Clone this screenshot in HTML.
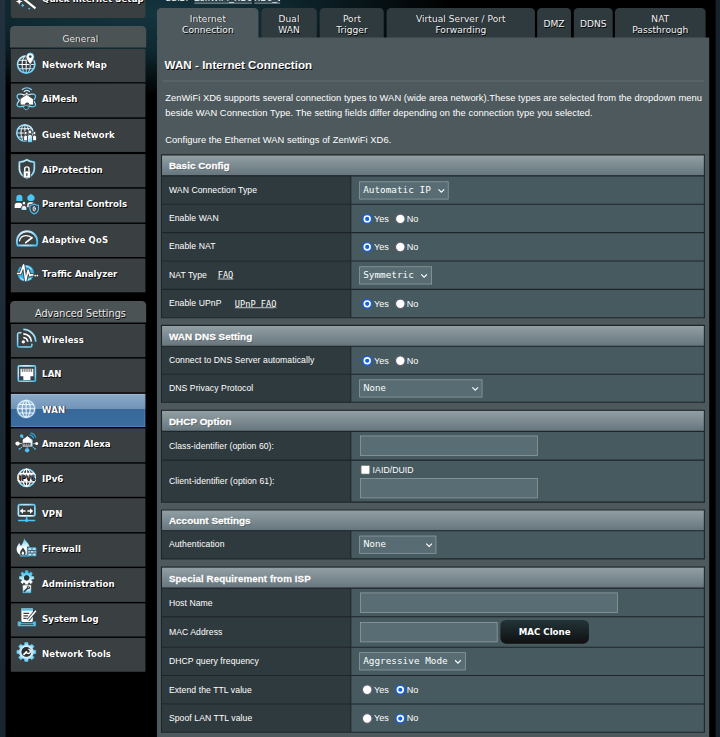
<!DOCTYPE html>
<html lang="en">
<head>
<meta charset="utf-8">
<title>ASUS Wireless Router ZenWiFi XD6 - Internet Connection</title>
<style>
*{box-sizing:border-box;margin:0;padding:0}
html,body{width:720px;height:737px;overflow:hidden;background:#1f2f3a}
body{font-family:"Liberation Sans",Arial,sans-serif;color:#fff}
#stage{position:absolute;left:0;top:0;width:1000px;height:1024px;transform:scale(.72);transform-origin:0 0;overflow:hidden;
 background:linear-gradient(#21323e,#18242e)}
#blk{position:absolute;left:7.6px;top:0;width:986.6px;height:1024px;background:radial-gradient(ellipse 430px 115px at 190px 18px,#14353f 0,#0f2830 45%,#000 100%) #000}
/* ---------- sidebar ---------- */
#side{position:absolute;left:14.5px;top:0;width:187.4px}
.split{position:absolute;left:-.6px;width:188.9px;height:29.6px;background:#4c5355;border-radius:6px 6px 0 0;padding:2.4px 0 0 6.6px;
 font:13.5px/29px "DejaVu Sans",sans-serif;text-align:center;color:#eee;text-shadow:1px 1px 0 #000;overflow:hidden}
.mi{position:absolute;left:0;width:187.4px;height:46.5px;background:#3a3f42;font:bold 12px/45.2px "DejaVu Sans",sans-serif;
 padding-left:44px;text-shadow:1px 1px 0 #000;white-space:nowrap}
.mi.on{background:linear-gradient(#8dabc9 0,#7093b7 46.5%,#386899 46.5%,#3b6da0 100%);box-shadow:inset 0 1px 0 #a5c0dc,inset -1px 0 0 #6b9dd3,inset 0 -1px 0 #568cc5}
.mi svg{position:absolute;left:5px;top:7px;width:32px;height:32px;overflow:visible}
.ssid{position:absolute;left:230px;top:-9.3px;font:12px/14px "Liberation Sans",sans-serif;color:#fff;white-space:nowrap}
.ssid u{display:inline-block;vertical-align:top;overflow:hidden;height:14px;margin-left:5px;text-decoration-thickness:1.3px;text-underline-offset:1.5px;letter-spacing:.55px;background:rgba(255,255,255,.12)}
/* ---------- tabs ---------- */
.tab{position:absolute;top:11px;height:41.5px;background:#2f3a3e;border-radius:6px 6px 0 0;font:12.7px/16px "DejaVu Sans",sans-serif;
 text-align:center;color:#f2f2f2;display:flex;align-items:center;justify-content:center;text-shadow:1px 1px 0 #000;padding-top:3.6px}
.tab.on{background:#4d595d}
#panel{position:absolute;left:218px;top:52px;width:767px;height:980px;background:#4d595d;border-radius:4px 0 0 0}
.ttl{position:absolute;left:10.6px;top:28px;font:bold 16.2px/20px "Liberation Sans",sans-serif;text-shadow:1px 1px 0 #000;white-space:nowrap}
.hr{position:absolute;left:8px;top:60px;width:752px;height:1px;background:#6b777b}
.desc{position:absolute;left:11.5px;font:13px/21px "Liberation Sans",sans-serif;white-space:nowrap;letter-spacing:.045px}
/* ---------- tables ---------- */
.tb{position:absolute;left:6px;width:755px;overflow:hidden}
.ln{position:absolute;left:0;top:0;pointer-events:none}
.th{background:linear-gradient(#93a1a6,#66757c);font:bold 13.8px "Liberation Sans",sans-serif;padding:2.4px 0 0 10.6px;
 text-shadow:1px 1px 0 rgba(0,0,0,.35);white-space:nowrap;display:flex;align-items:center;-webkit-text-stroke:.35px #fff}
.r{position:relative;background:#475a5f}
.r .l{position:absolute;left:0;top:0;bottom:0;width:263px;background:#2f3a3e;font:12px/15px "Liberation Sans",sans-serif;
 padding:.8px 0 0 10.6px;display:flex;align-items:center;white-space:nowrap;letter-spacing:.09px}
.r .c{position:absolute;left:262px;top:0;bottom:0;right:0}
.l a{color:#fff;font:12px "DejaVu Sans Mono","Liberation Mono",monospace;text-decoration:underline;margin-left:18.5px;letter-spacing:0}
.sel{position:absolute;left:13.4px;top:50%;margin-top:-12.2px;height:25px;background:#576d73;border:1px solid #929ea1;font:13px/22.5px "DejaVu Sans Mono","Liberation Mono",monospace;
 padding-left:4px;white-space:nowrap;color:#fff}
.sel.s2{font:12px/23.5px "DejaVu Sans",sans-serif}
.sel svg{position:absolute;right:4.5px;top:9px;width:10px;height:7px}
.inp{position:absolute;left:14px;height:27.5px;background:#596e74;border:1px solid #929ea1}
.rd{position:absolute;top:11.9px;width:16px;height:16px}
.rt{position:absolute;top:12.7px;font:12.6px/15px "Liberation Sans",sans-serif;letter-spacing:.1px}
.btn{position:absolute;left:208.6px;top:4px;width:123.6px;height:33px;border-radius:8px;background:linear-gradient(#233438,#0f1011);
 font:bold 12px/34.5px "DejaVu Sans",sans-serif;text-align:center}
</style>
</head>
<body>
<div id="stage">
<svg width="0" height="0" style="position:absolute"><defs><radialGradient id="ig" gradientUnits="userSpaceOnUse" cx="16" cy="12" r="17"><stop offset=".35" stop-color="#fff"/><stop offset="1" stop-color="#3cc0f4"/></radialGradient><linearGradient id="ig2" gradientUnits="userSpaceOnUse" x1="0" y1="0" x2="0" y2="28"><stop offset="0" stop-color="#49c6f5"/><stop offset=".45" stop-color="#fff"/><stop offset=".7" stop-color="#fff"/><stop offset="1" stop-color="#49c6f5"/></linearGradient><radialGradient id="ig3" gradientUnits="userSpaceOnUse" cx="16.6" cy="12.5" r="14"><stop offset=".45" stop-color="#f4fbff"/><stop offset="1" stop-color="#45c4f5"/></radialGradient></defs></svg>
<div id="blk"></div><div style="position:absolute;left:994.2px;top:0;width:6px;height:1024px;background:#15222c"></div>
<div id="side">
<div class="mi" style="top:-21.81px;border-radius:5px;line-height:42.6px"><svg viewBox="0 0 32 32" fill="none" stroke="url(#ig)" stroke-width="2" stroke-linecap="round" stroke-linejoin="round"><path d="M8 9.600L29.300 26.500" stroke="#3a3f42" stroke-width="5.200" stroke-linecap="butt"/><path d="M8 9.600L29.300 26.500" stroke="#fff" stroke-width="3" stroke-linecap="butt"/><path d="M11.500 20.300l2.200 2.200-2.200 2.200-2.200-2.200zM20.500 25.500l1.600 1.600-1.600 1.600-1.600-1.600z" fill="#49c6f5" stroke="none"/><path d="M6.700 12.500l1.300 3.300 3.300 1.300-3.300 1.300-1.300 3.300-1.300-3.300-3.300-1.300 3.300-1.300z" fill="#fff" stroke="none"/></svg>Quick Internet Setup</div>
<div class="split" style="top:36.2px;font-size:12.7px">General</div>
<div class="mi" style="top:67.71px"><svg viewBox="0 0 32 32" fill="none" stroke="url(#ig)" stroke-width="2" stroke-linecap="round" stroke-linejoin="round"><circle cx="16.4" cy="14.6" r="12" stroke-width="2.3"/><g stroke-width="1.4"><ellipse cx="16.4" cy="14.6" rx="5.76" ry="12"/><path d="M16.4 2.6V26.6M4.4 14.6H28.4M5.96 8.60H26.84M5.96 20.60H26.84"/></g><path d="M22 -1.3a4.9 4.9 0 0 1 4.9 4.9c0 3.4-4.9 9.700-4.900 9.700s-4.900-6.300-4.900-9.700a4.900 4.900 0 0 1 4.900-4.900z" fill="#3a3f42" stroke="#3a3f42" stroke-width="3.4"/><path d="M22 -1.3a4.9 4.9 0 0 1 4.9 4.9c0 3.4-4.9 9.700-4.900 9.700s-4.900-6.300-4.900-9.700a4.900 4.900 0 0 1 4.900-4.900z" fill="#fff" stroke-width="1.3"/><circle cx="22" cy="3.6" r="1.9" fill="#3a3f42" stroke="none"/></svg>Network Map</div>
<div class="mi" style="top:116.32px"><svg viewBox="0 0 32 32" fill="none" stroke="url(#ig)" stroke-width="2" stroke-linecap="round" stroke-linejoin="round"><g stroke-width="1.7"><ellipse cx="16.5" cy="16.5" rx="14.500" ry="5.800" transform="rotate(30 16.5 16.5)"/><ellipse cx="16.5" cy="16.5" rx="14.500" ry="5.800" transform="rotate(-30 16.5 16.5)"/><ellipse cx="16.5" cy="18.5" rx="5.500" ry="11" transform="rotate(0 16.5 18.5)" stroke-width="1.300"/></g><path d="M17.500 8.500l9 6.300v8h-18.500v-8z" fill="#fff" stroke="#3a3f42" stroke-width="1.200"/><path d="M14.800 22.800a3 3 0 1 1 6 -.8z" fill="#3a3f42" stroke="none"/><path d="M13.500 4.300a5.500 5.500 0 0 1 7.500 0M11 1.300a9.300 9.300 0 0 1 12.500 0" stroke-width="1.700"/><circle cx="17.200" cy="6.800" r="1.200" fill="url(#ig)" stroke="none"/></svg>AiMesh</div>
<div class="mi" style="top:164.93px"><svg viewBox="0 0 32 32" fill="none" stroke="url(#ig)" stroke-width="2" stroke-linecap="round" stroke-linejoin="round"><circle cx="14.6" cy="12.6" r="11.4" stroke-width="2.2"/><g stroke-width="1.4"><ellipse cx="14.6" cy="12.6" rx="5.472" ry="11.4"/><path d="M14.6 1.2V24M3.2 12.6H26M4.68 6.90H24.52M4.68 18.30H24.52"/></g><g fill="#fff" stroke="#3a3f42" stroke-width="1.300"><circle cx="15.7" cy="12.8" r="2.3"/><path d="M12.8 23.2v-4.7a2.9 2.9 0 0 1 5.8 0v4.7z"/><circle cx="27.9" cy="12.8" r="2.3"/><path d="M25 23.2v-4.7a2.9 2.9 0 0 1 5.8 0v4.7z"/></g><g fill="url(#ig)" stroke="#3a3f42" stroke-width="1.300"><circle cx="21.7" cy="11.2" r="2.8"/><path d="M18.1 25.8v-7.6a3.6 3.6 0 0 1 7.2 0v7.6z"/></g></svg>Guest Network</div>
<div class="mi" style="top:213.54px"><svg viewBox="0 0 32 32" fill="none" stroke="url(#ig)" stroke-width="2" stroke-linecap="round" stroke-linejoin="round"><path d="M17.300 .8c2.900 2.200 6.300 3.200 10.400 3.400v9.300c0 6.500-4.300 10.400-10.400 13.200c-6.100-2.800-10.400-6.700-10.400-13.200v-9.300c4.100-.2 7.500-1.200 10.400-3.400z" stroke-width="2.400"/><rect x="12.300" y="16.500" width="10" height="9.800" rx="1" fill="#fff" stroke="#3a3f42" stroke-width="1"/><path d="M14.300 16.500v-2.700a3 3 0 0 1 6 0v2.700" stroke="#fff" stroke-width="2"/><path d="M17.300 20v2.800" stroke="#3a3f42" stroke-width="1.700"/></svg>AiProtection</div>
<div class="mi" style="top:262.15px"><svg viewBox="0 0 32 32" fill="none" stroke="url(#ig)" stroke-width="2" stroke-linecap="round" stroke-linejoin="round"><g stroke="none"><path d="M2.700 10v-4.300a4.200 4.200 0 0 1 8.400 0V10z" fill="#49c6f5"/><path d="M.4 20v-3.400a4 4 0 0 1 4-4h2.500a4 4 0 0 1 4 4V20z" fill="#fff"/><path d="M23 .4c3 1.200 5.200 3 5.200 5.600a5.200 4.300 0 0 1-10.400 0c0-2.600 2.200-4.400 5.200-5.600z" fill="#49c6f5"/><path d="M17.800 19v-3a4 4 0 0 1 4-4h2.400a4 4 0 0 1 4 4v3z" fill="#fff"/></g><g stroke="#3a3f42" stroke-width="1.200"><circle cx="13.300" cy="13.200" r="2.500" fill="#fff"/><path d="M9.300 22.800v-2.800a3.400 3.400 0 0 1 3.400-3.400h1.200a3.400 3.400 0 0 1 3.400 3.400v2.800z" fill="url(#ig)"/></g><path d="M27.500 14.300c1.700 1.300 3.700 1.800 5.900 1.900v4.700c0 3.700-2.400 5.700-5.900 7.300c-3.500-1.600-5.900-3.600-5.900-7.300v-4.700c2.200-.1 4.200-.6 5.900-1.900z" fill="#3a3f42" stroke="#3a3f42" stroke-width="3.600"/><path d="M27.500 14.300c1.700 1.300 3.700 1.800 5.900 1.900v4.700c0 3.700-2.400 5.700-5.900 7.300c-3.500-1.600-5.900-3.600-5.900-7.300v-4.700c2.200-.1 4.200-.6 5.900-1.900z" fill="#3a3f42" stroke="#49c6f5" stroke-width="1.600"/><ellipse cx="27.500" cy="21" rx="1.500" ry="3.300" stroke="#fff" stroke-width="1.300"/></svg>Parental Controls</div>
<div class="mi" style="top:310.76px"><svg viewBox="0 0 32 32" fill="none" stroke="url(#ig)" stroke-width="2" stroke-linecap="round" stroke-linejoin="round"><path d="M4.400 23h26.400a13.700 13.700 0 0 0 1-5.600a14.200 14.200 0 0 0-28.400 0a13.700 13.700 0 0 0 1 5.600z" stroke-width="2.500"/><path d="M7.100 16.600c1-4.500 4.300-7.200 8.300-7.400c3.400-.2 6 .8 8.700 2.700" stroke="#fff" stroke-width="1.700"/><path d="M15.700 19l8.800-6.800" stroke="#fff" stroke-width="2.300"/></svg>Adaptive QoS</div>
<div class="mi" style="top:359.38px"><svg viewBox="0 0 32 32" fill="none" stroke="url(#ig)" stroke-width="2" stroke-linecap="round" stroke-linejoin="round"><circle cx="15.700" cy="13.500" r="11.600" fill="#35b4e8" stroke="none"/><path d="M9 6.500a9.500 9.500 0 0 1 14.500 1.500M22.500 20.500a9.500 9.500 0 0 1-14 -1" stroke="#bfeaff" stroke-width="1.500"/><path d="M4.400 13.800h4l4.400-11.900 2.900 21.800 3.300-14.500 2.600 7.900 1.500-1.300h2.500" stroke="#3a3f42" stroke-width="4.600"/><path d="M4.400 13.800h4l4.400-11.900 2.900 21.800 3.300-14.500 2.600 7.900 1.500-1.300h2.500" stroke="#fff" stroke-width="2.200"/><circle cx="28.900" cy="16.700" r="1.200" fill="#fff" stroke="none"/><circle cx="31.900" cy="16.700" r="1.200" fill="#fff" stroke="none"/></svg>Traffic Analyzer</div>
<div class="split" style="top:418.4px">Advanced Settings</div>
<div class="mi" style="top:449.65px"><svg viewBox="0 0 32 32" fill="none" stroke="url(#ig)" stroke-width="2" stroke-linecap="round" stroke-linejoin="round"><path d="M9 5.200H6.400a2 2 0 0 0-2 2v15.800a2 2 0 0 0 2 2h15.900a2 2 0 0 0 2-2v-2" stroke-width="2.100"/><circle cx="12.400" cy="17.800" r="2.300" fill="#fff" stroke="none"/><path d="M12.400 11.800a6 6 0 0 1 6 6M12.400 6.600a11.200 11.200 0 0 1 11.200 11.200M12.400 .6a17.200 17.200 0 0 1 17.200 17.200" stroke-width="2.500" stroke-linecap="butt"/></svg>Wireless</div>
<div class="mi" style="top:498.15px"><svg viewBox="0 0 32 32" fill="none" stroke="url(#ig)" stroke-width="2" stroke-linecap="round" stroke-linejoin="round"><rect x="5.400" y="3.200" width="23.800" height="21.200" rx="1.200" stroke-width="2.200"/><path d="M8.400 7h17.900v10.400h-4v5.300h-9.900v-5.300h-4z" fill="#fff" stroke="none"/><path d="M11 7v4.500M13.600 7v4.500M16.200 7v4.500M18.800 7v4.500M21.400 7v4.500M23.900 7v4.500" stroke="#3a3f42" stroke-width="1.100" stroke-linecap="butt"/></svg>LAN</div>
<div class="mi on" style="top:546.65px"><svg viewBox="0 0 32 32" fill="none" stroke="url(#ig)" stroke-width="2" stroke-linecap="round" stroke-linejoin="round"><circle cx="16.300" cy="13.800" r="13.800" fill="#a8cbee" fill-opacity=".4" stroke="none"/><g stroke="#d9f1ff"><circle cx="16.3" cy="13.8" r="11.8" stroke-width="1.6"/><g stroke-width="1.5" stroke="#e8f7ff"><ellipse cx="16.3" cy="13.8" rx="5.664" ry="11.8"/><path d="M16.3 2V25.6M4.5 13.8H28.1M6.03 7.90H26.57M6.03 19.70H26.57"/></g></g></svg>WAN</div>
<div class="mi" style="top:595.15px"><svg viewBox="0 0 32 32" fill="none" stroke="url(#ig)" stroke-width="2" stroke-linecap="round" stroke-linejoin="round"><path d="M7 14.100h3M26 14.100h3M11.500 5.500l2 2.500M8.500 20.500l3-2.500M17.700 20.500v-2M27.500 20.500l-3-2.500" stroke-width="1.200"/><g stroke="none"><circle cx="4.400" cy="14.100" r="3" fill="#fff"/><circle cx="30.900" cy="14.100" r="2.100" fill="#fff"/><circle cx="10.100" cy="3.500" r="2.400" fill="#49c6f5"/><circle cx="17.700" cy="23.400" r="3" fill="#49c6f5"/><circle cx="7.100" cy="21.400" r="1.300" fill="#49c6f5"/><circle cx="28.600" cy="21.400" r="1.300" fill="#49c6f5"/></g><path d="M18.300 3.300l7.500 5.800v9.700h-14.900v-9.700z" fill="url(#ig)" stroke="#3a3f42" stroke-width="1.200"/><rect x="12.400" y="13" width="10" height="3.800" fill="#3a3f42" stroke="none"/><path d="M13.600 15h7.600" stroke="#fff" stroke-width="1.200" stroke-dasharray="1.300 1.100" stroke-linecap="butt"/><path d="M21.500 2.300a5.500 5.500 0 0 1 5 4M23 -.5a8.500 8.500 0 0 1 6.500 6" stroke="#2aa5d6" stroke-width="1.600"/></svg>Amazon Alexa</div>
<div class="mi" style="top:643.65px"><svg viewBox="0 0 32 32" fill="none" stroke="url(#ig)" stroke-width="2" stroke-linecap="round" stroke-linejoin="round"><circle cx="17" cy="12.5" r="12" stroke-width="2.3"/><g stroke-width="1.5" stroke="#fff"><ellipse cx="17" cy="12.5" rx="5.76" ry="12"/><path d="M17 0.5V24.5M5 12.5H29M6.56 6.50H27.44M6.56 18.50H27.44"/></g><rect x="4.300" y="7.200" width="25.400" height="10.500" rx="1.500" fill="#fff" stroke="none"/><text x="17" y="16.300" text-anchor="middle" font-family="DejaVu Sans,sans-serif" font-weight="bold" font-size="10.500" fill="#3a3f42" stroke="none" textLength="23" lengthAdjust="spacingAndGlyphs">IPV6</text></svg>IPv6</div>
<div class="mi" style="top:692.15px"><svg viewBox="0 0 32 32" fill="none" stroke="url(#ig)" stroke-width="2" stroke-linecap="round" stroke-linejoin="round"><rect x="5.500" y="2" width="23" height="15.600" rx="2" stroke-width="2.400"/><path d="M10 10.800h5.500M18 10.800h5.500" stroke="#fff" stroke-width="2.200" stroke-linecap="butt"/><path d="M11.800 7l-4.300 3.800 4.300 3.800zM21.700 7l4.300 3.800-4.300 3.800z" fill="#fff" stroke="none"/><path d="M17 18.500v5M6 24h22" stroke="#49c6f5" stroke-width="2.200"/><circle cx="17" cy="24" r="2.100" fill="#49c6f5" stroke="none"/></svg>VPN</div>
<div class="mi" style="top:740.65px"><svg viewBox="0 0 32 32" fill="none" stroke="url(#ig)" stroke-width="2" stroke-linecap="round" stroke-linejoin="round"><path d="M13.300 -.7c.5 3.500 8.300 7.300 8.300 15c0 5.400-4.200 9.400-9.300 9.400s-9.200-3.800-9.200-8.800c0-4 2.200-5.700 3.300-8.600c1.500 1.500 2.200 2.700 2.600 4.300c1.900-3 4.600-6.300 4.300-11.300z" fill="url(#ig2)" stroke="none"/><path d="M11.800 12.500c2.300 2.900 3.900 4.800 3.900 7.300a3.900 3.900 0 0 1-7.800 0c0-2.500 2.200-4.300 3.900-7.300z" fill="#3a3f42" stroke="none"/><path d="M11.800 17.300c1 1.300 1.700 2.200 1.700 3.400a1.700 1.700 0 0 1-3.400 0c0-1.200.9-2.100 1.700-3.400z" fill="#fff" stroke="none"/><rect x="18.900" y="12.500" width="11.300" height="11.800" fill="#3a3f42" stroke="#3a3f42" stroke-width="3"/><rect x="19.300" y="12.900" width="10.500" height="11" fill="#bfe9fb" stroke="#49c6f5" stroke-width="1.300"/><path d="M19.300 16.600h10.500M19.300 20.200h10.500M24.500 12.900v3.700M22 16.600v3.600M27.200 16.600v3.600M24.500 20.200v3.700" stroke="#3a3f42" stroke-width="1.100" stroke-linecap="butt"/><path d="M8 24.300h11" stroke="#49c6f5" stroke-width="1.500"/></svg>Firewall</div>
<div class="mi" style="top:789.15px"><svg viewBox="0 0 32 32" fill="none" stroke="url(#ig)" stroke-width="2" stroke-linecap="round" stroke-linejoin="round"><path d="M15.24 -0.58 L15.36 -3.36 L18.64 -3.36 L18.76 -0.58 L20.77 0.25 L22.81 -1.64 L25.14 0.69 L23.25 2.73 L24.08 4.74 L26.86 4.86 L26.86 8.14 L24.08 8.26 L23.25 10.27 L25.14 12.31 L22.81 14.64 L20.77 12.75 L18.76 13.58 L18.64 16.36 L15.36 16.36 L15.24 13.58 L13.23 12.75 L11.19 14.64 L8.86 12.31 L10.75 10.27 L9.92 8.26 L7.14 8.14 L7.14 4.86 L9.92 4.74 L10.75 2.73 L8.86 0.69 L11.19 -1.64 L13.23 0.25z M13.40 6.50a3.60 3.60 0 1 0 7.20 0a3.60 3.60 0 1 0 -7.20 0z" fill="url(#ig2)" fill-rule="evenodd" stroke="url(#ig2)" stroke-width=".8"/><circle cx="17" cy="6.500" r="3.700" fill="#2b3033" stroke="none"/><rect x="11.100" y="16.300" width="12.500" height="11.700" rx="1" fill="url(#ig2)" stroke="#3a3f42" stroke-width="1"/><path d="M13.800 25.500l4.500-4.500" stroke="#3a3f42" stroke-width="2.300"/><circle cx="19.600" cy="19.800" r="2.300" fill="#3a3f42" stroke="none"/><path d="M21 17.800l-1.600 2.200" stroke="#fff" stroke-width="1.200"/></svg>Administration</div>
<div class="mi" style="top:837.65px"><svg viewBox="0 0 32 32" fill="none" stroke="url(#ig)" stroke-width="2" stroke-linecap="round" stroke-linejoin="round"><path d="M9.700 0h15.900v19h-15.900z" fill="#fff" stroke="none"/><path d="M9.700 0h15.900v3.300h-15.900z" fill="#49c6f5" stroke="none"/><path d="M12.500 7h8M12.500 10.500h6.500M12.500 14h4.500" stroke="#3a3f42" stroke-width="1.700" stroke-linecap="butt"/><path d="M29.800 3.300l-11 13.200" stroke="#3a3f42" stroke-width="4.600" stroke-linecap="butt"/><path d="M29.800 3.300l-11 13.200" stroke="#fff" stroke-width="2.200" stroke-linecap="butt"/><path d="M4.400 17.700h5.300v2.200h15.900v-2.200h4.600v7.300h-25.800z" fill="#49c6f5" stroke="#3a3f42" stroke-width=".8"/><path d="M9 22.200h17" stroke="#3a3f42" stroke-width="1.200"/></svg>System Log</div>
<div class="mi" style="top:886.15px"><svg viewBox="0 0 32 32" fill="none" stroke="url(#ig)" stroke-width="2" stroke-linecap="round" stroke-linejoin="round"><path d="M14.19 2.79 L14.42 -0.62 L18.78 -0.62 L19.01 2.79 L21.76 3.93 L24.33 1.68 L27.42 4.77 L25.17 7.34 L26.31 10.09 L29.72 10.32 L29.72 14.68 L26.31 14.91 L25.17 17.66 L27.42 20.23 L24.33 23.32 L21.76 21.07 L19.01 22.21 L18.78 25.62 L14.42 25.62 L14.19 22.21 L11.44 21.07 L8.87 23.32 L5.78 20.23 L8.03 17.66 L6.89 14.91 L3.48 14.68 L3.48 10.32 L6.89 10.09 L8.03 7.34 L5.78 4.77 L8.87 1.68 L11.44 3.93z M10.00 12.50a6.60 6.60 0 1 0 13.20 0a6.60 6.60 0 1 0 -13.20 0z" fill="url(#ig3)" fill-rule="evenodd" stroke="url(#ig3)" stroke-width=".8"/><circle cx="16.600" cy="12.500" r="6.800" fill="#2b3033" stroke="none"/><path d="M13.200 16l3.600-3.600" stroke="#fff" stroke-width="2.400"/><path d="M20.200 8.800a3 3 0 1 1-3.800 3.800" stroke="#fff" stroke-width="1.900"/></svg>Network Tools</div>
</div>
<div class="ssid">SSID: <u style="width:80px">ZenWiFi_XD6</u><u style="width:36px;margin-left:3.5px">XD6_5G</u></div>
<div class="tab on" style="left:218.1px;width:141.3px">Internet<br>Connection</div>
<div class="tab" style="left:362.5px;width:77.8px">Dual<br>WAN</div>
<div class="tab" style="left:444.4px;width:88.9px">Port<br>Trigger</div>
<div class="tab" style="left:537.2px;width:205.8px">Virtual Server / Port<br>Forwarding</div>
<div class="tab" style="left:746.1px;width:46.7px">DMZ</div>
<div class="tab" style="left:796.5px;width:54.9px">DDNS</div>
<div class="tab" style="left:854.4px;width:125.4px">NAT<br>Passthrough</div>

<div id="panel">
<div class="ttl">WAN - Internet Connection</div>
<div class="hr"></div>
<div class="desc" style="top:73px">ZenWiFi XD6 supports several connection types to WAN (wide area network).These types are selected from the dropdown menu</div>
<div class="desc" style="top:94px">beside WAN Connection Type. The setting fields differ depending on the connection type you selected.</div>
<div class="desc" style="top:131px">Configure the Ethernet WAN settings of ZenWiFi XD6.</div>
<div class="tb" style="top:163px;height:226px">
<div class="th" style="height:29px">Basic Config</div>
<div class="r" style="height:40px"><div class="l">WAN Connection Type</div><div class="c"><div class="sel" style="width:124.1px">Automatic IP<svg viewBox="0 0 10 7"><path d="M1 1l4 4 4-4" fill="none" stroke="#fff" stroke-width="1.6"/></svg></div></div></div>
<div class="r" style="height:39px"><div class="l">Enable WAN</div><div class="c"><svg class="rd" viewBox="0 0 16 16" style="left:16.4px"><circle cx="8" cy="8" r="6.200" fill="#fff" stroke="#1560dc" stroke-width="2.100"/><circle cx="8" cy="8" r="2.900" fill="#1560dc"/></svg><span class="rt" style="left:33.4px">Yes</span><svg class="rd" viewBox="0 0 16 16" style="left:61.8px"><circle cx="8" cy="8" r="6.700" fill="#fff" stroke="#5f5f6d" stroke-width="1.700"/></svg><span class="rt" style="left:78.800px">No</span></div></div>
<div class="r" style="height:39px"><div class="l">Enable NAT</div><div class="c"><svg class="rd" viewBox="0 0 16 16" style="left:16.4px"><circle cx="8" cy="8" r="6.200" fill="#fff" stroke="#1560dc" stroke-width="2.100"/><circle cx="8" cy="8" r="2.900" fill="#1560dc"/></svg><span class="rt" style="left:33.4px">Yes</span><svg class="rd" viewBox="0 0 16 16" style="left:61.8px"><circle cx="8" cy="8" r="6.700" fill="#fff" stroke="#5f5f6d" stroke-width="1.700"/></svg><span class="rt" style="left:78.800px">No</span></div></div>
<div class="r" style="height:40px"><div class="l">NAT Type<a style="margin-left:15px">FAQ</a></div><div class="c"><div class="sel" style="width:100.3px">Symmetric<svg viewBox="0 0 10 7"><path d="M1 1l4 4 4-4" fill="none" stroke="#fff" stroke-width="1.6"/></svg></div></div></div>
<div class="r" style="height:39px"><div class="l">Enable UPnP<a>UPnP FAQ</a></div><div class="c"><svg class="rd" viewBox="0 0 16 16" style="left:16.4px"><circle cx="8" cy="8" r="6.200" fill="#fff" stroke="#1560dc" stroke-width="2.100"/><circle cx="8" cy="8" r="2.900" fill="#1560dc"/></svg><span class="rt" style="left:33.4px">Yes</span><svg class="rd" viewBox="0 0 16 16" style="left:61.8px"><circle cx="8" cy="8" r="6.700" fill="#fff" stroke="#5f5f6d" stroke-width="1.700"/></svg><span class="rt" style="left:78.800px">No</span></div></div>
</div>
<div class="tb" style="top:400px;height:107px">
<div class="th" style="height:29px">WAN DNS Setting</div>
<div class="r" style="height:39px"><div class="l">Connect to DNS Server automatically</div><div class="c"><svg class="rd" viewBox="0 0 16 16" style="left:16.4px"><circle cx="8" cy="8" r="6.200" fill="#fff" stroke="#1560dc" stroke-width="2.100"/><circle cx="8" cy="8" r="2.900" fill="#1560dc"/></svg><span class="rt" style="left:33.4px">Yes</span><svg class="rd" viewBox="0 0 16 16" style="left:61.8px"><circle cx="8" cy="8" r="6.700" fill="#fff" stroke="#5f5f6d" stroke-width="1.700"/></svg><span class="rt" style="left:78.800px">No</span></div></div>
<div class="r" style="height:39px"><div class="l">DNS Privacy Protocol</div><div class="c"><div class="sel s2" style="width:171px">None<svg viewBox="0 0 10 7"><path d="M1 1l4 4 4-4" fill="none" stroke="#fff" stroke-width="1.6"/></svg></div></div></div>
</div>
<div class="tb" style="top:518px;height:127px">
<div class="th" style="height:29px">DHCP Option</div>
<div class="r" style="height:40px"><div class="l">Class-identifier (option 60):</div><div class="c"><div class="inp" style="top:6px;width:247px"></div></div></div>
<div class="r" style="height:58px"><div class="l">Client-identifier (option 61):</div><div class="c"><i style="position:absolute;left:15px;top:7px;width:13px;height:13px;background:#fff;border:1px solid #777;border-radius:2px"></i><span class="rt" style="left:31.5px;top:6.8px;font-size:12px">IAID/DUID</span><div class="inp" style="top:25px;width:247px"></div></div></div>
</div>
<div class="tb" style="top:656px;height:68px">
<div class="th" style="height:29px">Account Settings</div>
<div class="r" style="height:39px"><div class="l">Authentication</div><div class="c"><div class="sel s2" style="width:107px">None<svg viewBox="0 0 10 7"><path d="M1 1l4 4 4-4" fill="none" stroke="#fff" stroke-width="1.6"/></svg></div></div></div>
</div>
<div class="tb" style="top:736px;height:229px">
<div class="th" style="height:29px">Special Requirement from ISP</div>
<div class="r" style="height:40px"><div class="l">Host Name</div><div class="c"><div class="inp" style="top:6px;width:358px"></div></div></div>
<div class="r" style="height:42px"><div class="l">MAC Address</div><div class="c"><div class="inp" style="top:7px;width:191px"></div><div class="btn">MAC Clone</div></div></div>
<div class="r" style="height:39px"><div class="l">DHCP query frequency</div><div class="c"><div class="sel" style="width:147.5px">Aggressive Mode<svg viewBox="0 0 10 7"><path d="M1 1l4 4 4-4" fill="none" stroke="#fff" stroke-width="1.6"/></svg></div></div></div>
<div class="r" style="height:40px"><div class="l">Extend the TTL value</div><div class="c"><svg class="rd" viewBox="0 0 16 16" style="left:16.4px"><circle cx="8" cy="8" r="6.700" fill="#fff" stroke="#5f5f6d" stroke-width="1.700"/></svg><span class="rt" style="left:33.4px">Yes</span><svg class="rd" viewBox="0 0 16 16" style="left:61.8px"><circle cx="8" cy="8" r="6.200" fill="#fff" stroke="#1560dc" stroke-width="2.100"/><circle cx="8" cy="8" r="2.900" fill="#1560dc"/></svg><span class="rt" style="left:78.800px">No</span></div></div>
<div class="r" style="height:39px"><div class="l">Spoof LAN TTL value</div><div class="c"><svg class="rd" viewBox="0 0 16 16" style="left:16.4px"><circle cx="8" cy="8" r="6.700" fill="#fff" stroke="#5f5f6d" stroke-width="1.700"/></svg><span class="rt" style="left:33.4px">Yes</span><svg class="rd" viewBox="0 0 16 16" style="left:61.8px"><circle cx="8" cy="8" r="6.200" fill="#fff" stroke="#1560dc" stroke-width="2.100"/><circle cx="8" cy="8" r="2.900" fill="#1560dc"/></svg><span class="rt" style="left:78.800px">No</span></div></div>
</div>
<svg class="ln" width="767" height="972" viewBox="0 0 767 972"><path d="M5.55 163.14H761.05M5.55 192.24H761.05M5.55 231.61H761.05M5.55 271.06H761.05M5.55 310.50H761.05M5.55 349.94H761.05M5.55 389.39H761.05M6.30 163.14V389.39M760.30 163.14V389.39M269.20 192.24V389.39M5.55 399.94H761.05M5.55 428.83H761.05M5.55 467.72H761.05M5.55 506.75H761.05M6.30 399.94V506.75M760.30 399.94V506.75M269.20 428.83V506.75M5.55 517.72H761.05M5.55 547.17H761.05M5.55 587.10H761.05M5.55 645.36H761.05M6.30 517.72V645.36M760.30 517.72V645.36M269.20 547.17V645.36M5.55 656.33H761.05M5.55 685.22H761.05M5.55 724.25H761.05M6.30 656.33V724.25M760.30 656.33V724.25M269.20 685.22V724.25M5.55 735.50H761.05M5.55 764.81H761.05M5.55 804.53H761.05M5.55 846.96H761.05M5.55 886.19H761.05M5.55 925.78H761.05M5.55 965.08H761.05M6.30 735.50V965.08M760.30 735.50V965.08M269.20 764.81V965.08" fill="none" stroke="#1e2528" stroke-width="1.5"/></svg>
</div>
</div>
</body>
</html>
